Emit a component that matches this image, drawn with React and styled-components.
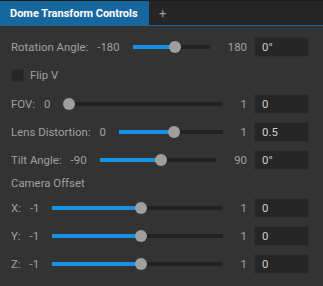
import React from "react";
import styled, { createGlobalStyle } from "styled-components";

const Global = createGlobalStyle`
  html, body { margin: 0; padding: 0; background: #333333; }
  body { font-family: Roboto, "Liberation Sans", sans-serif; }
  * { box-sizing: border-box; }
`;

const Frame = styled.div`
  width: 323px;
  height: 286px;
  background: #333333;
  display: flex;
  flex-direction: column;
  overflow: hidden;
`;

const TabBar = styled.div`
  display: flex;
  align-items: stretch;
  height: 26px;
  background: #252525;
  border-top: 1px solid #1c1c1c;
  border-bottom: 1px solid #1f6499;
`;

const Tab = styled.div`
  display: flex;
  align-items: center;
  width: 149px;
  padding: 0 0 0 10px;
  background: #17679f;
  color: #ffffff;
  font-weight: 700;
  font-size: 11px;
  white-space: nowrap;
`;

const AddTab = styled.div`
  display: flex;
  align-items: center;
  padding: 0 0 0 10px;
  color: #9a9a9a;
  font-size: 13px;
`;

const Content = styled.div`
  display: flex;
  flex-direction: column;
  gap: 8.3px;
  padding: 11px 14px 0 11px;
  color: #a0a0a0;
  font-size: 11.4px;
`;

const Row = styled.div`
  display: flex;
  align-items: center;
  height: 20px;
`;

const Label = styled.span`
  white-space: nowrap;
  margin-right: 9px;
`;

const MinVal = styled.span`
  white-space: nowrap;
  margin-right: 13px;
`;

const MaxVal = styled.span`
  white-space: nowrap;
  margin: 0 7px 0 18px;
`;

const Track = styled.div`
  position: relative;
  flex: 1;
  height: 4px;
  background: #222222;
  border-radius: 1px;
`;

const Fill = styled.div`
  position: absolute;
  left: 0;
  top: 0;
  bottom: 0;
  background: #1591e6;
`;

const Thumb = styled.div`
  position: absolute;
  top: 50%;
  width: 12px;
  height: 12px;
  margin-top: -6px;
  border-radius: 50%;
  background: #9e9e9e;
`;

const ValueBox = styled.div`
  width: 55px;
  height: 20px;
  flex: none;
  background: #262626;
  border: 1px solid #2e2e2e;
  color: #d0d0d0;
  padding: 0 0 0 7px;
  display: flex;
  align-items: center;
`;

const CheckRow = styled.label`
  display: flex;
  align-items: center;
  height: 20px;
  gap: 6px;
`;

const Box = styled.span`
  width: 13px;
  height: 13px;
  background: #262626;
  border: 1px solid #2c2c2c;
`;

const Section = styled.div`
  line-height: 11px;
  height: 11px;
  color: #a0a0a0;
`;

function Slider({ label, min, max, value, display }) {
  const pct = (value - min) / (max - min);
  return (
    <Row>
      <Label>{label}</Label>
      <MinVal>{min}</MinVal>
      <Track>
        <Fill style={{ width: `calc(${pct} * (100% - 5px) + 6px)`, opacity: pct === 0 ? 0 : 1 }} />
        <Thumb style={{ left: `calc(${pct} * (100% - 5px))` }} />
      </Track>
      <MaxVal>{max}</MaxVal>
      <ValueBox>{display}</ValueBox>
    </Row>
  );
}

export default function App() {
  return (
    <>
      <Global />
      <Frame>
        <TabBar>
          <Tab>Dome Transform Controls</Tab>
          <AddTab>+</AddTab>
        </TabBar>
        <Content>
          <Slider label="Rotation Angle:" min={-180} max={180} value={0} display="0°" />
          <CheckRow>
            <Box />
            <span>Flip V</span>
          </CheckRow>
          <Slider label="FOV:" min={0} max={1} value={0} display="0" />
          <Slider label="Lens Distortion:" min={0} max={1} value={0.5} display="0.5" />
          <Slider label="Tilt Angle:" min={-90} max={90} value={0} display="0°" />
          <Section>Camera Offset</Section>
          <Slider label="X:" min={-1} max={1} value={0} display="0" />
          <Slider label="Y:" min={-1} max={1} value={0} display="0" />
          <Slider label="Z:" min={-1} max={1} value={0} display="0" />
        </Content>
      </Frame>
    </>
  );
}
